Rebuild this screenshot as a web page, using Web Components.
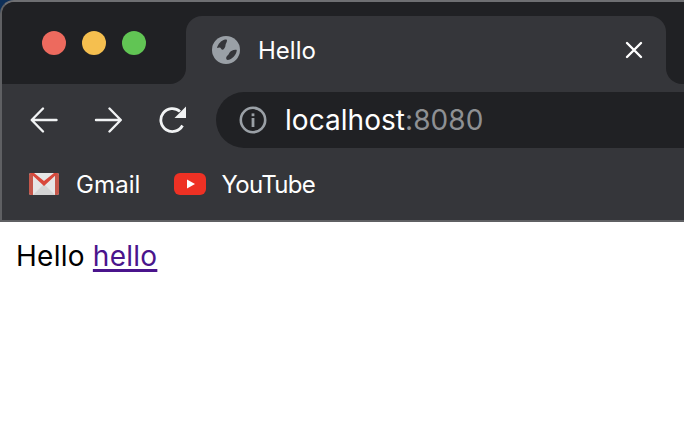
<!DOCTYPE html>
<html>
<head>
<meta charset="utf-8">
<title>Hello</title>
<style>
html, body { margin: 0; padding: 0; background: #fff; overflow: hidden; }
body { font-family: Inter, "Liberation Sans", sans-serif; }
</style>
</head>
<body>
<browser-window>
  <tab-strip>
    <browser-tab title-text="Hello"></browser-tab>
  </tab-strip>
  <nav-bar host-name="localhost" port=":8080"></nav-bar>
  <bookmark-bar>
    <bookmark-item kind="gmail">Gmail</bookmark-item>
    <bookmark-item kind="youtube">YouTube</bookmark-item>
  </bookmark-bar>
  <page-body slot="page">Hello <a href="#">hello</a></page-body>
</browser-window>

<script>
class BrowserWindow extends HTMLElement{
    constructor(){
        super();
        this.shadowDOM=this.attachShadow({mode:"open"});
        this.shadowDOM.innerHTML=`
        <style>
        :host{
            display:block;
            width:684px;
            height:448px;
            background:#fff;
        }
        .corner{
            background:#0e2f57;
        }
        .chrome{
            height:218px;
            background:#35363a;
            border-top:2px solid #6e6f72;
            border-left:2px solid #5f6063;
            border-bottom:2px solid #5f6063;
            border-top-left-radius:14px;
            overflow:hidden;
            color:#fff;
        }
        </style>
        <div class="corner"><div class="chrome"><slot></slot></div></div>
        <slot name="page"></slot>`;
    }
}

class TabStrip extends HTMLElement{
    constructor(){
        super();
        this.shadowDOM=this.attachShadow({mode:"open"});
        this.shadowDOM.innerHTML=`
        <style>
        :host{
            display:flex;
            height:90px;
            align-items:flex-start;
        }
        .controls{
            width:184px;
            height:82px;
            flex:none;
            box-sizing:border-box;
            padding:29px 0 0 40px;
            display:flex;
            gap:16px;
            background:#202124;
            border-bottom-right-radius:16px;
        }
        .controls span{
            width:24px;
            height:24px;
            border-radius:50%;
        }
        .rest{
            flex:1;
            height:82px;
            background:#202124;
            border-bottom-left-radius:16px;
        }
        </style>
        <div class="controls">
            <span style="background:#ed6a5e"></span>
            <span style="background:#f5bf4f"></span>
            <span style="background:#61c554"></span>
        </div>
        <slot></slot>
        <div class="rest"></div>`;
    }
}

class BrowserTab extends HTMLElement{
    constructor(){
        super();
        this.shadowDOM=this.attachShadow({mode:"open"});
        this.shadowDOM.innerHTML=`
        <style>
        :host{
            display:block;
            width:480px;
            height:90px;
            flex:none;
            box-sizing:border-box;
            padding-top:14px;
            background:linear-gradient(#202124 0 30px,#35363a 30px);
        }
        .tab{
            height:76px;
            box-sizing:border-box;
            padding:0 22px 8px 26px;
            display:flex;
            align-items:center;
            background:#35363a;
            border-radius:16px 16px 0 0;
        }
        svg{display:block;flex:none}
        .title{
            margin-left:18px;
            flex:1;
            font-size:24px;
            letter-spacing:0;
        }
        </style>
        <div class="tab">
            <svg width="28" height="28" viewBox="0 0 28 28">
                <circle cx="14" cy="14" r="14" fill="#9aa0a6"/>
                <path d="M5 12C6 8 9 4.500 13 3.500c1.300-.3 2 0 2 1 0 1.800-1.500 3-1.500 4.800s-1.500 4.200-2.800 4.500c-1.300.2-1.700-2.300-3.200-2.300-1 0-1.700.5-2.500.5Z" fill="#35363a"/>
                <path d="M24.800 14c-.3 4-3 7.500-7 9.500-1.500.6-3 .6-3.500-.5-.5-1.700.5-3 1.800-4 1-1.500 1.500-3 3.200-4 1.800-.8 3.800-1.500 5.500-1Z" fill="#35363a"/>
            </svg>
            <span class="title"></span>
            <svg width="20" height="20" viewBox="0 0 20 20">
                <path d="M3 3l14 14M17 3L3 17" stroke="#fff" stroke-width="2.400" stroke-linecap="round"/>
            </svg>
        </div>`;
        this.shadowDOM.querySelector(".title").textContent=this.getAttribute("title-text");
    }
}

class NavBar extends HTMLElement{
    constructor(){
        super();
        this.shadowDOM=this.attachShadow({mode:"open"});
        this.shadowDOM.innerHTML=`
        <style>
        :host{
            display:flex;
            height:56px;
            align-items:center;
        }
        .buttons{
            width:214px;
            flex:none;
            box-sizing:border-box;
            padding-left:28px;
            display:flex;
            gap:36px;
        }
        svg{display:block;flex:none}
        .omnibox{
            flex:1;
            height:56px;
            box-sizing:border-box;
            padding-left:23px;
            display:flex;
            align-items:center;
            background:#202124;
            border-radius:28px 0 0 28px;
        }
        .url{
            margin-left:18px;
            font-size:28px;
            letter-spacing:.05px;
        }
        .port{color:#8e9093}
        </style>
        <div class="buttons">
            <svg width="28" height="28" viewBox="0 0 28 28" fill="none" stroke="#f1f3f4" stroke-width="2.400" stroke-linecap="round" stroke-linejoin="round">
                <path d="M26.500 14H2.500M13 2.500L1.700 14 13 25.500"/>
            </svg>
            <svg width="28" height="28" viewBox="0 0 28 28" fill="none" stroke="#f1f3f4" stroke-width="2.400" stroke-linecap="round" stroke-linejoin="round">
                <path d="M2 14h24M15.500 2.500L26.800 14 15.500 25.500"/>
            </svg>
            <svg width="28" height="28" viewBox="0 0 28 28" fill="none" style="margin-left:1px">
                <path d="M23.500 19.500A11.500 11.500 0 1 1 21 5.500" stroke="#f1f3f4" stroke-width="2.800"/>
                <path d="M27 0.500V12H15.500Z" fill="#f1f3f4"/>
            </svg>
        </div>
        <div class="omnibox">
            <svg width="28" height="28" viewBox="0 0 28 28">
                <circle cx="14" cy="14" r="12.200" fill="none" stroke="#9aa0a6" stroke-width="2.600"/>
                <rect x="12.600" y="12" width="2.800" height="9" fill="#9aa0a6"/>
                <rect x="12.600" y="7.400" width="2.800" height="2.800" fill="#9aa0a6"/>
            </svg>
            <span class="url"><span class="host"></span><span class="port"></span></span>
        </div>`;
        this.shadowDOM.querySelector(".host").textContent=this.getAttribute("host-name");
        this.shadowDOM.querySelector(".port").textContent=this.getAttribute("port");
    }
}

class BookmarkBar extends HTMLElement{
    constructor(){
        super();
        this.shadowDOM=this.attachShadow({mode:"open"});
        this.shadowDOM.innerHTML=`
        <style>
        :host{
            display:flex;
            height:72px;
            box-sizing:border-box;
            padding-left:27px;
            gap:33px;
            align-items:center;
        }
        </style>
        <slot></slot>`;
    }
}

const bookmarkIcons={
    gmail:`<svg width="30" height="22" viewBox="0 0 30 22">
        <rect x="0" y="0" width="30" height="22" rx="2" fill="#e6e6e6"/>
        <path d="M4 22L15 11 26 22Z" fill="#d4d4d4"/>
        <path d="M0 2Q0 0 2 0H4V22H2Q0 22 0 20ZM26 0H28Q30 0 30 2V20Q30 22 28 22H26Z" fill="#c5574b"/>
        <path d="M1 0H5L15 8 25 0H29L15 13Z" fill="#d9483b"/>
    </svg>`,
    youtube:`<svg width="32" height="22" viewBox="0 0 32 22">
        <rect x="0" y="0" width="32" height="22" rx="6" fill="#ee3124"/>
        <path d="M13 6.500L21 11 13 15.500Z" fill="#fff"/>
    </svg>`
};

class BookmarkItem extends HTMLElement{
    constructor(){
        super();
        this.shadowDOM=this.attachShadow({mode:"open"});
        const youtube=this.getAttribute("kind")=="youtube";
        this.shadowDOM.innerHTML=`
        <style>
        :host{
            display:flex;
            align-items:center;
            gap:${youtube?16:17}px;
            font-size:24px;
            letter-spacing:${youtube?-.7:.1}px;
        }
        svg{display:block;flex:none}
        </style>
        ${bookmarkIcons[this.getAttribute("kind")]}
        <slot></slot>`;
    }
}

class PageBody extends HTMLElement{
    constructor(){
        super();
        this.shadowDOM=this.attachShadow({mode:"open"});
        this.shadowDOM.innerHTML=`
        <style>
        :host{
            display:block;
            padding:16px 16px;
            font-size:28px;
            line-height:36px;
            letter-spacing:.25px;
            color:#000;
        }
        ::slotted(a){
            color:#4a148c;
            text-decoration:underline;
            text-decoration-thickness:2.500px;
            text-underline-offset:3px;
        }
        </style>
        <slot></slot>`;
    }
}

customElements.define("browser-window",BrowserWindow);
customElements.define("tab-strip",TabStrip);
customElements.define("browser-tab",BrowserTab);
customElements.define("nav-bar",NavBar);
customElements.define("bookmark-bar",BookmarkBar);
customElements.define("bookmark-item",BookmarkItem);
customElements.define("page-body",PageBody);
</script>
</body>
</html>
